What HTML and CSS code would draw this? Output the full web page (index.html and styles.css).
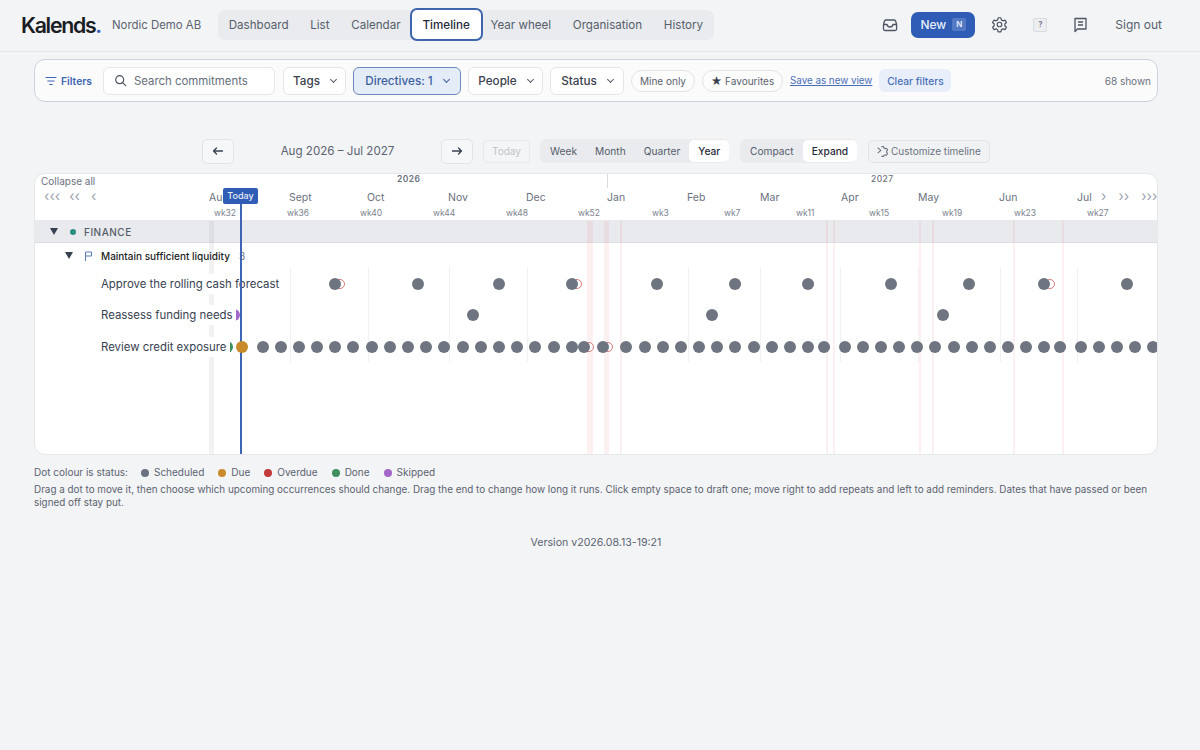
FILE: index.html
```html
<!DOCTYPE html>
<html>
<head>
  <meta charset="utf-8">
  <title>Kalends - Timeline</title>
  <link rel="stylesheet" href="styles.css">
</head>
<body>
<header class="topbar">
  <div class="logo">Kalends<span class="logo-dot">.</span></div>
  <div class="org-name">Nordic Demo AB</div>
  <nav class="nav">
    <a class="nav-item">Dashboard</a>
    <a class="nav-item">List</a>
    <a class="nav-item">Calendar</a>
    <a class="nav-item active">Timeline</a>
    <a class="nav-item">Year wheel</a>
    <a class="nav-item">Organisation</a>
    <a class="nav-item">History</a>
  </nav>
  <div class="top-actions">
    <svg class="icon-inbox" width="16" height="16" viewBox="0 0 16 16" fill="none" stroke="#4b5563" stroke-width="1.3" stroke-linejoin="round"><path d="M4 3h8q1 0 1.6 1l1 3.5V12q0 1.5-1.5 1.5h-10.200q-1.400 0-1.400-1.500V7.500l1-3.500Q3 3 4 3z"/><path d="M1.500 7.500H5q.5 2.500 3 2.500t3-2.500h3.500"/></svg>
    <button class="new-btn" type="button">New <span class="kbd">N</span></button>
    <svg class="icon-gear" width="17" height="17" viewBox="0 0 24 24" fill="none" stroke="#4b5563" stroke-width="1.700" stroke-linejoin="round"><path d="M10 2.500h4l.6 3 2.300 1.300 2.900-1 2 3.400-2.300 2v2.600l2.300 2-2 3.400-2.900-1-2.300 1.300-.6 3h-4l-.6-3-2.300-1.300-2.900 1-2-3.400 2.300-2v-2.600l-2.300-2 2-3.400 2.900 1L9.400 5.500z"/><circle cx="12" cy="12" r="3.200"/></svg>
    <span class="help-key">?</span>
    <svg class="icon-notes" width="15" height="16" viewBox="0 0 15 16" fill="none" stroke="#4b5563" stroke-width="1.300" stroke-linejoin="round"><path d="M2 1.500h11v10.500H4.500L2 14.500z"/><path d="M5 5h5M5 8h5"/></svg>
    <a class="sign-out">Sign out</a>
  </div>
</header>

<main class="page">
  <section class="filters">
    <span class="filters-label">
      <svg width="12" height="12" viewBox="0 0 12 12" fill="none" stroke="#3f66b5" stroke-width="1.200" stroke-linecap="round"><path d="M1 2.500h10M2.800 6h6.400M4.700 9.500h2.600"/></svg>
      Filters
    </span>
    <label class="search">
      <svg width="13" height="13" viewBox="0 0 13 13" fill="none" stroke="#4b5563" stroke-width="1.200" stroke-linecap="round"><circle cx="5.700" cy="5.700" r="4"/><path d="M8.700 8.700l3 3"/></svg>
      <span>Search commitments</span>
    </label>
    <button class="select w-tags" type="button">Tags <i class="chev"></i></button>
    <button class="select selected w-dir" type="button">Directives: 1 <i class="chev"></i></button>
    <button class="select w-people" type="button">People <i class="chev"></i></button>
    <button class="select w-status" type="button">Status <i class="chev"></i></button>
    <button class="pill w-mine" type="button">Mine only</button>
    <button class="pill w-fav" type="button"><span class="star">★</span> Favourites</button>
    <a class="save-link">Save as new view</a>
    <button class="clear-btn" type="button">Clear filters</button>
    <span class="shown">68 shown</span>
  </section>

  <section class="toolbar">
    <button class="arrow-btn" type="button"><svg width="12" height="12" viewBox="0 0 12 12" fill="none" stroke="#374151" stroke-width="1.300" stroke-linecap="round" stroke-linejoin="round"><path d="M10.500 6h-9M4.500 3l-3 3 3 3"/></svg></button>
    <div class="range">Aug 2026 – Jul 2027</div>
    <button class="arrow-btn" type="button"><svg width="12" height="12" viewBox="0 0 12 12" fill="none" stroke="#374151" stroke-width="1.300" stroke-linecap="round" stroke-linejoin="round"><path d="M1.500 6h9M7.500 3l3 3-3 3"/></svg></button>
    <button class="today-btn" type="button">Today</button>
    <div class="seg seg-zoom">
      <span>Week</span><span>Month</span><span>Quarter</span><span class="on">Year</span>
    </div>
    <div class="seg seg-density">
      <span>Compact</span><span class="on">Expand</span>
    </div>
    <button class="custom-btn" type="button">
      <svg width="13" height="13" viewBox="0 0 24 24" fill="none" stroke="#6b7280" stroke-width="2" stroke-linejoin="round"><path d="M10 3h4l.6 2.500 2.300 1.300 2.500-.8 2 3.400-1.900 1.800v2.600l1.900 1.800-2 3.400-2.500-.8-2.300 1.300L14 21h-4M3 5l6 5-6 5"/></svg>
      Customize timeline
    </button>
  </section>

  <section class="timeline" id="timeline">
    <div class="tl-head" id="tl-head">
      <a class="collapse-all">Collapse all</a>
      <div class="jump jump-left"><span>‹‹‹</span><span>‹‹</span><span>‹</span></div>
      <div class="jump jump-right"><span>›</span><span>››</span><span>›››</span></div>
      <span class="year-mark"></span>
      <span class="today-tag">Today</span>
    </div>
    <div class="tl-group">
      <i class="tri"></i><i class="team-dot"></i><span>FINANCE</span>
    </div>
    <div class="tl-sub">
      <i class="tri"></i>
      <svg width="9" height="10" viewBox="0 0 9 10" fill="none" stroke="#5b7bb8" stroke-width="1"><path d="M1.500 10V1h6v4h-6"/></svg>
      <span class="sub-name">Maintain sufficient liquidity</span>
      <span class="sub-count">3</span>
    </div>
    <div class="tl-row" id="row-0"><span class="row-name">Approve the rolling cash forecast</span></div>
    <div class="tl-row" id="row-1"><span class="row-name">Reassess funding needs</span></div>
    <div class="tl-row" id="row-2"><span class="row-name">Review credit exposure</span></div>
    <span class="now-line"></span>
  </section>

  <section class="legend">
    <div class="legend-line">
      <span class="legend-title">Dot colour is status:</span>
      <span class="key"><i class="scheduled"></i>Scheduled</span>
      <span class="key"><i class="due"></i>Due</span>
      <span class="key"><i class="overdue"></i>Overdue</span>
      <span class="key"><i class="done"></i>Done</span>
      <span class="key"><i class="skipped"></i>Skipped</span>
    </div>
    <p>Drag a dot to move it, then choose which upcoming occurrences should change. Drag the end to change how long it runs. Click empty space to draft one; move right to add repeats and left to add reminders. Dates that have passed or been signed off stay put.</p>
  </section>

  <footer class="version">Version v2026.08.13-19:21</footer>
</main>

<script>
  // all x values are page pixels, the card starts at 35
  const originX = 35;
  const timeline = document.getElementById('timeline');
  const head = document.getElementById('tl-head');

  function addTo(parent, className, x, text) {
    const el = document.createElement('span');
    el.className = className;
    el.style.left = (x - originX) + 'px';
    if (text) el.textContent = text;
    parent.appendChild(el);
    return el;
  }

  const years = [['2026', 397], ['2027', 871]];
  const months = [['Aug', 209], ['Sept', 289], ['Oct', 367], ['Nov', 448], ['Dec', 526], ['Jan', 607],
    ['Feb', 687], ['Mar', 760], ['Apr', 841], ['May', 918], ['Jun', 999], ['Jul', 1077]];
  const weeks = [['wk32', 214], ['wk36', 287], ['wk40', 360], ['wk44', 433], ['wk48', 506], ['wk52', 578],
    ['wk3', 652], ['wk7', 724], ['wk11', 796], ['wk15', 869], ['wk19', 942], ['wk23', 1014], ['wk27', 1087]];
  years.forEach(y => addTo(head, 'year-label', y[1], y[0]));
  months.forEach(m => addTo(head, 'month-label', m[1], m[0]));
  weeks.forEach(w => addTo(head, 'week-label', w[1], w[0]));

  [290, 367.500, 448.500, 526.500, 687.500, 760, 840, 918, 999.500, 1076.500]
    .forEach(x => addTo(timeline, 'grid-line', x));

  addTo(timeline, 'band band-grey', 209).style.width = '5px';
  [[587, 6], [604, 5], [620, 2], [825.500, 2], [833, 2], [919, 2], [932, 2], [1013, 1.500], [1062, 1.500]]
    .forEach(b => { addTo(timeline, 'band', b[0]).style.width = b[1] + 'px'; });

  const rows = [
    [335, 418, 499, 571.500, 657, 735, 808, 891, 969, 1044, 1127],
    [473, 712, 943],
    [262.500, 280.700, 299, 317, 335, 353, 371.500, 389.500, 408, 426, 444, 462.500, 480.700, 499, 517, 535, 553.500, 571.500,
      584, 602.500, 626, 644.500, 662.500, 681, 699, 717, 735, 753.500, 771.700, 790, 808, 824, 844.700, 862.500, 881,
      899, 917, 935, 953.700, 971.700, 990, 1008, 1026, 1044, 1060, 1081, 1099, 1117, 1135, 1153]
  ];
  const rings = [[340, 577, 735.500, 808.500, 1050], [], [589, 608, 824.500, 1060.500]];
  rows.forEach((xs, i) => {
    const row = document.getElementById('row-' + i);
    rings[i].forEach(x => addTo(row, 'ring', x));
    xs.forEach(x => addTo(row, 'dot', x));
  });
  addTo(document.getElementById('row-1'), 'dot under skipped', 234);
  addTo(document.getElementById('row-2'), 'dot under done', 226.500);
  addTo(document.getElementById('row-2'), 'dot due', 242);
</script>
</body>
</html>
```

FILE: styles.css
```css
* {
  box-sizing: border-box;
}

body {
  margin: 0;
  background-color: #f3f4f6;
  font-family: Inter, "Noto Sans", sans-serif;
  color: #1f2937;
}

button {
  font-family: inherit;
  cursor: pointer;
}

/* top bar */
.topbar {
  display: flex;
  align-items: center;
  height: 52px;
  padding: 0 38px 2px 21px;
  border-bottom: 1px solid #e4e6ea;
}

.logo {
  width: 91px;
  font-size: 21.300px;
  font-weight: 600;
  letter-spacing: -1.300px;
  color: #1a1d23;
}

.logo-dot {
  color: #2f5cb5;
}

.org-name {
  width: 106px;
  font-size: 11.400px;
  color: #5b6370;
}

.nav {
  display: flex;
  align-items: center;
  height: 30px;
  background-color: #e9ebee;
  border-radius: 7px;
}

.nav-item {
  padding: 0 11px 0 10.700px;
  font-size: 11.600px;
  color: #565e6b;
}

.nav-item.active {
  display: flex;
  align-items: center;
  height: 33px;
  margin: 0 -3px 0 -2px;
  padding: 0 11px;
  background-color: #ffffff;
  border: 2px solid #3f66ad;
  border-radius: 7px;
  font-weight: 500;
  color: #1f2937;
}

.top-actions {
  display: flex;
  align-items: center;
  margin-left: auto;
}

.new-btn {
  display: flex;
  align-items: center;
  justify-content: center;
  gap: 6px;
  width: 64px;
  height: 26px;
  margin: 0 16px 0 13px;
  padding: 0;
  background-color: #2f5cb5;
  border: none;
  border-radius: 7px;
  font-size: 12px;
  font-weight: 500;
  color: #e8eefa;
}

.kbd {
  display: inline-block;
  width: 14px;
  height: 13px;
  background-color: #5479c4;
  border-radius: 2px;
  font-size: 8px;
  font-weight: 600;
  line-height: 13px;
  text-align: center;
}

.help-key {
  width: 14px;
  height: 14px;
  margin: 0 26px 0 25px;
  background-color: #eceef1;
  border: 1px solid #d8dbe0;
  border-radius: 2px;
  font-size: 7px;
  font-weight: 700;
  line-height: 12px;
  text-align: center;
  color: #6b7280;
}

.sign-out {
  margin-left: 27px;
  font-size: 12px;
  color: #565e6b;
}

.page {
  padding: 7px 42px 0 34px;
}

/* filter bar */
.filters {
  display: flex;
  align-items: center;
  height: 43px;
  padding: 0 6px 0 10px;
  background-color: #fbfbfc;
  border: 1px solid #ccd3df;
  border-radius: 11px;
}

.filters-label {
  display: flex;
  align-items: center;
  gap: 4px;
  width: 58px;
  font-size: 10.300px;
  font-weight: 600;
  color: #3f66b5;
}

.search {
  display: flex;
  align-items: center;
  gap: 7px;
  width: 172px;
  height: 28px;
  padding-left: 10px;
  background-color: #ffffff;
  border: 1px solid #e5e7eb;
  border-radius: 6px;
  font-size: 11.400px;
  color: #666e7a;
}

.select {
  display: flex;
  align-items: center;
  justify-content: center;
  gap: 11px;
  height: 28px;
  margin-left: 7px;
  padding: 0;
  background-color: #ffffff;
  border: 1px solid #e3e5e9;
  border-radius: 6px;
  font-size: 11.700px;
  font-weight: 500;
  color: #3a414d;
}

.search + .select {
  margin-left: 8px;
}

.chev {
  width: 5px;
  height: 5px;
  margin-top: -3px;
  border-right: 1px solid #555c68;
  border-bottom: 1px solid #555c68;
  transform: rotate(45deg);
}

.select.selected {
  background-color: #e4ecf8;
  border-color: #6d8abd;
  color: #3d5f9e;
}

.selected .chev {
  border-color: #3d5f9e;
}

.w-tags { width: 63px; }
.w-dir { width: 108px; }
.w-people { width: 75px; }
.w-status { width: 74px; }

.pill {
  height: 22px;
  margin-left: 7px;
  padding: 0;
  background-color: #fcfcfc;
  border: 1px solid #e2e4e8;
  border-radius: 11px;
  font-size: 10px;
  color: #5b6370;
}

.w-mine { width: 64px; }
.w-fav { width: 81px; }

.star {
  font-size: 11px;
  color: #3a414d;
}

.save-link {
  margin-left: 7px;
  font-size: 9.800px;
  color: #4a6fb8;
  text-decoration: underline;
}

.clear-btn {
  width: 72px;
  height: 23px;
  margin-left: 7px;
  padding: 0;
  background-color: #e8effa;
  border: none;
  border-radius: 6px;
  font-size: 10.200px;
  font-weight: 500;
  color: #4a6fb8;
}

.shown {
  margin-left: auto;
  font-size: 10px;
  color: #6b7280;
}

/* view controls */
.toolbar {
  display: flex;
  align-items: center;
  height: 24px;
  margin: 37px 0 10px;
  padding-left: 168px;
}

.arrow-btn {
  display: flex;
  align-items: center;
  justify-content: center;
  width: 32px;
  height: 25px;
  padding: 0;
  background-color: #f6f7f8;
  border: 1px solid #e2e4e8;
  border-radius: 5px;
}

.range {
  width: 207px;
  font-size: 11.600px;
  text-align: center;
  color: #5b6370;
}

.today-btn {
  width: 47px;
  height: 23px;
  margin: 0 10px;
  padding: 0;
  background-color: #f4f5f6;
  border: 1px solid #e8eaed;
  border-radius: 4px;
  font-size: 10px;
  color: #c0c4ca;
}

.seg {
  display: flex;
  align-items: center;
  height: 24px;
  margin-right: 11px;
  padding: 0 1px;
  background-color: #e9ebee;
  border-radius: 6px;
  font-size: 10.200px;
  color: #565e6b;
}

.seg span {
  display: flex;
  align-items: center;
  height: 22px;
  padding: 0 9px;
  border-radius: 5px;
}

.seg .on {
  background-color: #ffffff;
  font-weight: 500;
  color: #1f2937;
}

.seg-zoom { width: 189px; }
.seg-density { width: 117px; }

.custom-btn {
  display: flex;
  align-items: center;
  gap: 2px;
  width: 122px;
  height: 23px;
  padding: 0 0 0 7px;
  background-color: #f1f2f4;
  border: 1px solid #e2e4e8;
  border-radius: 5px;
  font-size: 10px;
  color: #6b7280;
}

/* timeline canvas */
.timeline {
  position: relative;
  height: 282px;
  background-color: #ffffff;
  border: 1px solid #e5e7eb;
  border-radius: 11px;
  overflow: hidden;
}

.tl-head {
  height: 47px;
  border-bottom: 1px solid #e8e9ec;
}

.collapse-all {
  position: absolute;
  left: 6px;
  top: 1px;
  font-size: 10px;
  color: #6b7280;
}

.jump {
  position: absolute;
  top: 15px;
  display: flex;
  font-size: 14px;
  line-height: 14px;
  color: #9ca3af;
}

.jump-left {
  left: 9px;
  gap: 9px;
}

.jump-left span:last-child {
  margin-left: 2px;
}

.jump-right {
  left: 1066px;
  gap: 12px;
}

.year-mark {
  position: absolute;
  left: 572px;
  top: 0;
  width: 1px;
  height: 14px;
  background-color: #d9dbdf;
}

.year-label {
  position: absolute;
  top: 0;
  font-size: 8.500px;
  font-weight: 600;
  letter-spacing: 0.400px;
  color: #6b7280;
}

.year-label + .year-label {
  font-weight: 500;
}

.month-label {
  position: absolute;
  top: 17px;
  font-size: 10.500px;
  color: #6b7280;
}

.week-label {
  position: absolute;
  top: 34px;
  font-size: 8.500px;
  color: #7b828d;
}

.today-tag {
  position: absolute;
  z-index: 6;
  left: 188px;
  top: 14px;
  width: 35px;
  height: 16px;
  background-color: #2f5cb5;
  border-radius: 2px;
  font-size: 9px;
  font-weight: 500;
  line-height: 16px;
  text-align: center;
  color: #e8eefa;
}

.tl-group {
  display: flex;
  align-items: center;
  height: 22px;
  padding-left: 15px;
  background-color: #e9eaee;
  border-bottom: 1px solid #dcdde1;
  font-size: 10px;
  font-weight: 500;
  letter-spacing: 0.500px;
  color: #555c68;
}

.tri {
  width: 0;
  height: 0;
  border-left: 4.500px solid transparent;
  border-right: 4.500px solid transparent;
  border-top: 7px solid #374151;
}

.team-dot {
  width: 6px;
  height: 6px;
  margin: 0 8px 0 12px;
  background-color: #2a8f82;
  border-radius: 50%;
}

.tl-sub {
  display: flex;
  align-items: center;
  height: 25px;
  padding-left: 30px;
  font-size: 10px;
  font-weight: 500;
  color: #1a1d23;
}

.tl-sub svg {
  margin: 0 8px 0 11px;
}

.sub-count {
  margin-left: 9px;
  font-weight: 400;
  color: #6b7280;
}

.tl-row {
  position: relative;
  display: flex;
  align-items: center;
  height: 31.500px;
}

.row-name {
  position: relative;
  z-index: 2;
  margin-left: 66px;
  padding-right: 3px;
  background-color: #ffffff;
  font-size: 11.400px;
  line-height: 20px;
  color: #374151;
}

.dot {
  position: absolute;
  z-index: 4;
  top: 9.750px;
  width: 12px;
  height: 12px;
  margin-left: -6px;
  background-color: #6f7580;
  border-radius: 50%;
}

.dot.under {
  z-index: 1;
}

.dot.due {
  background-color: #c98a2b;
}

.dot.skipped {
  background-color: #a566c9;
}

.dot.done {
  background-color: #3f8f5f;
}

.ring {
  position: absolute;
  z-index: 3;
  top: 10.750px;
  width: 10px;
  height: 10px;
  margin-left: -5px;
  background-color: #ffffff;
  border: 1px solid #d9777a;
  border-radius: 50%;
}

.grid-line {
  position: absolute;
  top: 93px;
  width: 1px;
  height: 95px;
  background-color: #f1f1f3;
}

.band {
  position: absolute;
  z-index: 1;
  top: 47px;
  bottom: 0;
  background-color: rgba(235, 90, 90, 0.09);
}

.band.band-grey {
  background-color: rgba(90, 95, 105, 0.08);
}

.now-line {
  position: absolute;
  z-index: 3;
  left: 205px;
  top: 30px;
  bottom: 0;
  width: 2px;
  background-color: #3f66b5;
}

/* legend */
.legend {
  margin-top: 11px;
  font-size: 10px;
  line-height: 13px;
  color: #5b6370;
}

.legend-line {
  display: flex;
  gap: 14px;
  height: 13px;
}

.legend-title {
  margin-right: -1px;
}

.key {
  display: flex;
  align-items: center;
  gap: 5px;
}

.key i {
  width: 8px;
  height: 8px;
  border-radius: 50%;
}

.key .scheduled { background-color: #6b7280; }
.key .due { background-color: #c98a2b; }
.key .overdue { background-color: #c23a3a; }
.key .done { background-color: #3f8f5f; }
.key .skipped { background-color: #a566c9; }

.legend p {
  margin: 4px 0 0;
  font-size: 9.900px;
}

.version {
  margin-top: 27px;
  font-size: 10.600px;
  text-align: center;
  color: #5b6370;
}
```
